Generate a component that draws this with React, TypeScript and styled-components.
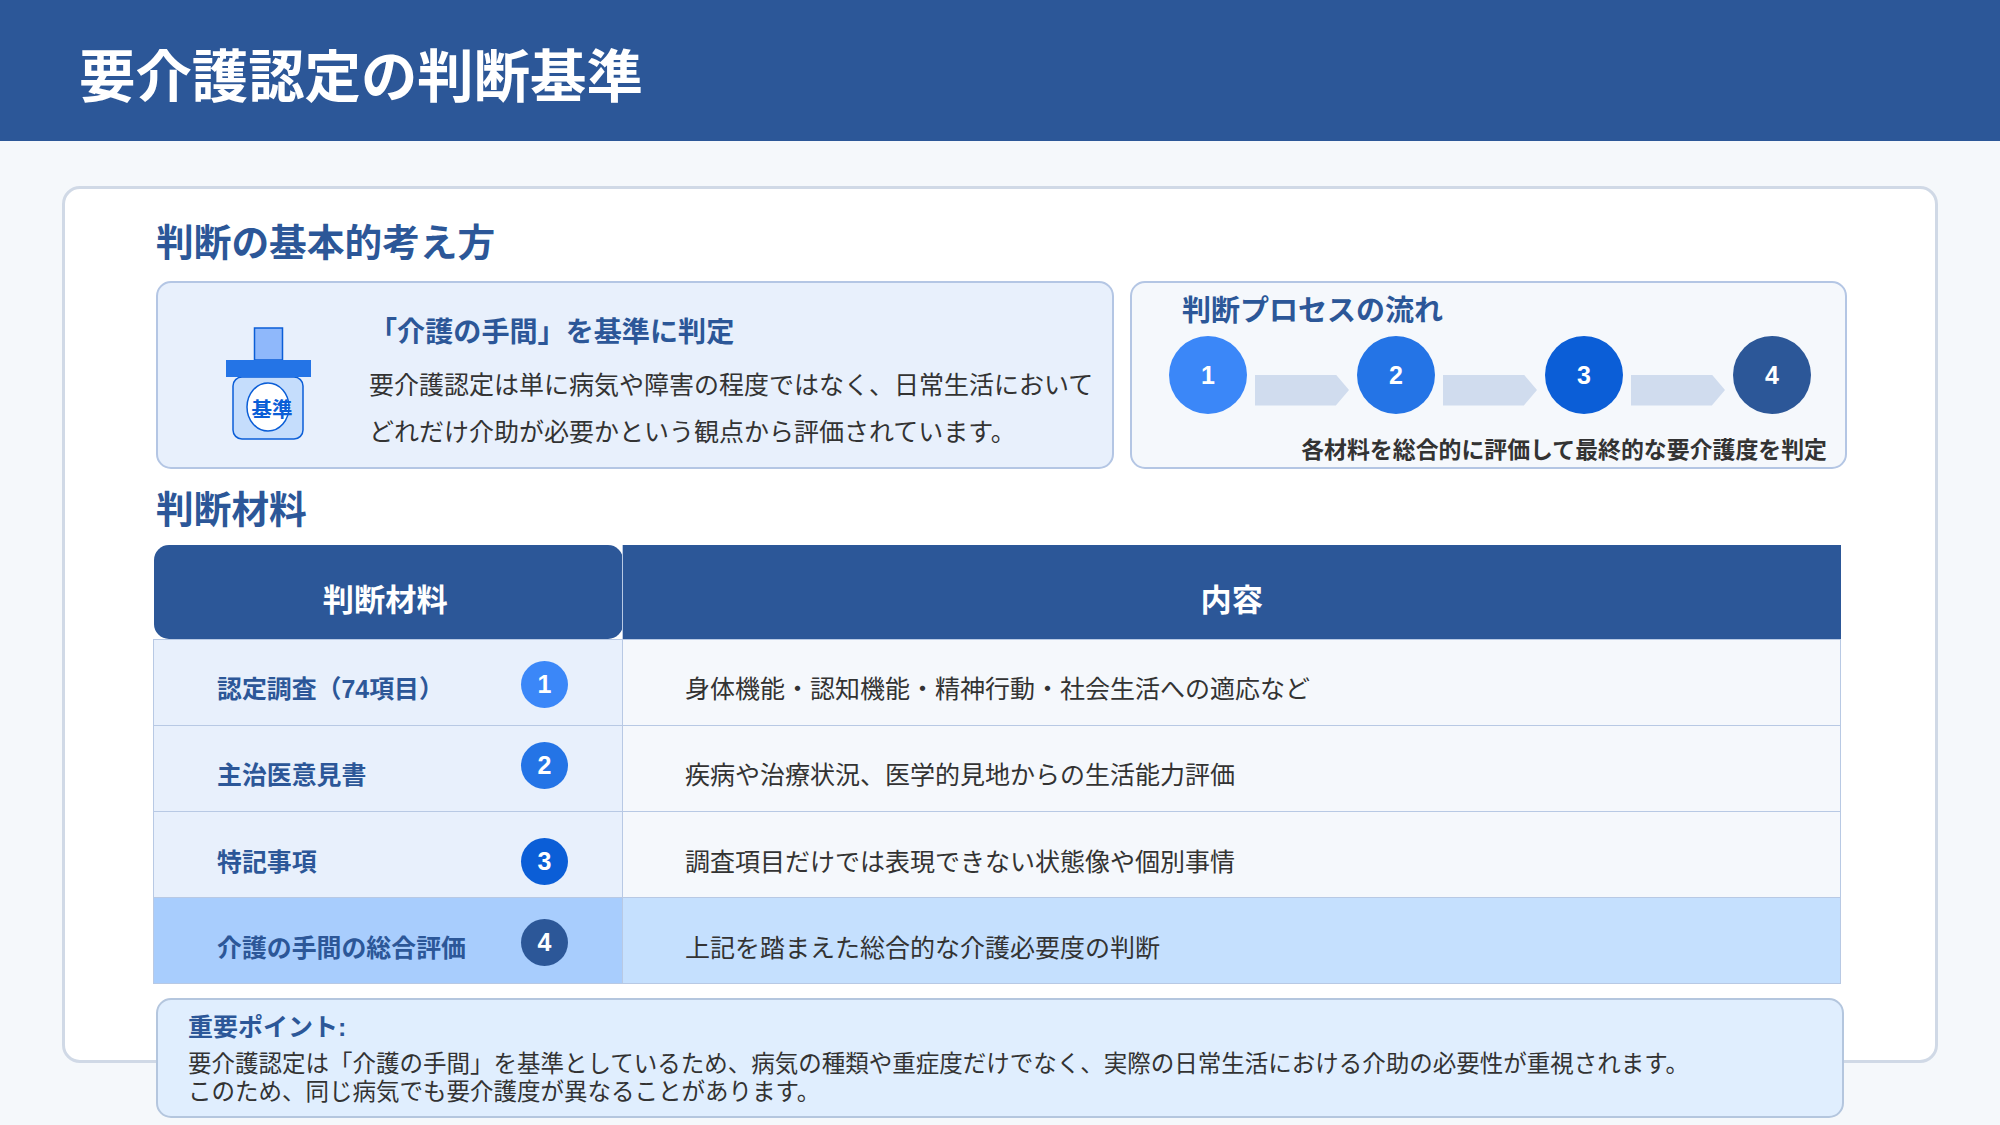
import React from "react";
import styled, { createGlobalStyle } from "styled-components";

const FONT = `"Liberation Sans", "Noto Sans CJK JP", sans-serif`;

const Global = createGlobalStyle`
  html, body { margin: 0; padding: 0; background: #f5f8fb; }
  body { font-family: ${FONT}; width: 2000px; height: 1125px; overflow: hidden; }
  * { box-sizing: border-box; }
`;

const Page = styled.div`
  width: 2000px;
  height: 1125px;
  background: #f5f8fb;
  display: flex;
  flex-direction: column;
`;

const Header = styled.header`
  height: 141px;
  background: #2c5798;
  display: flex;
  align-items: center;
  padding: 15px 0 0 79px;
`;

const Title = styled.h1`
  margin: 0;
  color: #fff;
  font-size: 56.4px;
  font-weight: 700;
  line-height: 1;
`;

const Main = styled.main`
  padding: 45px 62px 0;
`;

const Card = styled.section`
  height: 877px;
  background: #fff;
  border: 3px solid #d0d9e6;
  border-radius: 18px;
  padding: 31px 88px 0 91px;
`;

const SectionTitle = styled.h2<{ $gap?: number }>`
  margin: ${(p) => p.$gap ?? 0}px 0 0;
  color: #2c5798;
  font-size: 37.7px;
  line-height: 46px;
  font-weight: 700;
`;

const TopRow = styled.div`
  display: grid;
  grid-template-columns: 958px 717px;
  gap: 16px;
  margin-top: 15px;
  height: 188px;
`;

const Concept = styled.div`
  display: flex;
  align-items: center;
  background: #e8f0fc;
  border: 2px solid #b4c6e4;
  border-radius: 15px;
  padding-left: 50px;
  gap: 41px;
`;

const IconSvg = styled.svg`
  flex: none;
  width: 120px;
  height: 120px;
  margin-top: 23px;
  overflow: visible;
`;

const IconText = styled.text`
  font-family: ${FONT};
  font-size: 20.5px;
  font-weight: 700;
  fill: #0b5ed7;
`;

const ConceptBody = styled.div`
  display: flex;
  flex-direction: column;
  padding-top: 18px;
`;

const ConceptTitle = styled.h3`
  margin: 0 0 9px;
  color: #2c5798;
  font-size: 28.1px;
  line-height: 40px;
  font-weight: 700;
`;

const ConceptText = styled.p`
  margin: 0;
  color: #333;
  font-size: 25px;
  line-height: 47px;
`;

const Process = styled.div`
  background: #f5f8fc;
  border: 2px solid #b4c6e4;
  border-radius: 15px;
  padding: 8px 18px 0 37px;
  display: flex;
  flex-direction: column;
`;

const ProcessTitle = styled.h3`
  margin: 0 0 0 13px;
  color: #2c5798;
  font-size: 29px;
  line-height: 40px;
  font-weight: 700;
`;

const Steps = styled.div`
  display: flex;
  align-items: center;
  gap: 8px;
  margin-top: 5px;
`;

const StepCircle = styled.div<{ $color: string }>`
  flex: none;
  width: 78px;
  height: 78px;
  border-radius: 50%;
  background: ${(p) => p.$color};
  color: #fff;
  font-weight: 700;
  font-size: 25px;
  display: flex;
  align-items: center;
  justify-content: center;
`;

const Arrow = styled.div`
  flex: none;
  width: 94px;
  height: 31px;
  margin-top: 30px;
  background: #d0dcee;
  clip-path: polygon(0 0, 86% 0, 100% 50%, 86% 100%, 0 100%);
`;

const ProcessNote = styled.p`
  margin: 20px 0 0;
  text-align: right;
  color: #333;
  font-size: 22.9px;
  font-weight: 700;
  line-height: 32px;
`;

const TableWrap = styled.div`
  margin: 12px 0 0 -3px;
  width: 1688px;
`;

const Table = styled.table`
  width: 100%;
  table-layout: fixed;
  border-collapse: collapse;
`;

const Th = styled.th<{ $rounded?: boolean }>`
  height: 94px;
  padding: 12px ${(p) => (p.$rounded ? "5px" : "0")} 0 0;
  background: #2c5798;
  color: #fff;
  font-size: 31.2px;
  font-weight: 700;
  text-align: center;
  border-radius: ${(p) => (p.$rounded ? "15px" : "0")};
  border-right: ${(p) => (p.$rounded ? "1px solid #b8c9e4" : "none")};
`;

const Tr = styled.tr`
  height: 86px;
`;

const NameCell = styled.td<{ $strong?: boolean; $pad: number }>`
  position: relative;
  padding: ${(p) => p.$pad}px 0 0 63px;
  background: ${(p) => (p.$strong ? "#a8cdfd" : "#e8f0fc")};
  border: 1px solid #b8c9e4;
  color: #2c5798;
  font-size: 24.9px;
  font-weight: 700;
`;

const DescCell = styled.td<{ $strong?: boolean; $pad: number }>`
  padding: ${(p) => p.$pad}px 0 0 62px;
  background: ${(p) => (p.$strong ? "#c5e0fe" : "#f5f8fc")};
  border: 1px solid #b8c9e4;
  color: #333;
  font-size: 25px;
`;

const Badge = styled.span<{ $color: string; $top: number }>`
  position: absolute;
  left: 367px;
  top: ${(p) => p.$top}px;
  width: 47px;
  height: 47px;
  border-radius: 50%;
  background: ${(p) => p.$color};
  color: #fff;
  font-size: 25px;
  font-weight: 700;
  display: flex;
  align-items: center;
  justify-content: center;
`;

const Note = styled.aside`
  width: 1688px;
  height: 120px;
  margin-top: 14px;
  background: #e0eefe;
  border: 2px solid #b4c6de;
  border-radius: 15px;
  padding: 12px 30px 0;
`;

const NoteTitle = styled.div`
  color: #2c5798;
  font-size: 25px;
  line-height: 30px;
  font-weight: 700;
  margin-bottom: 8px;
`;

const NoteText = styled.p`
  margin: 0;
  color: #333;
  font-size: 23.5px;
  line-height: 28px;
`;

const C1 = "#3b87f8";
const C2 = "#2474e6";
const C3 = "#0b5ed7";
const C4 = "#2c5798";

const rows = [
  { name: "認定調査（74項目）", desc: "身体機能・認知機能・精神行動・社会生活への適応など", color: C1, top: 21, pad: 10 },
  { name: "主治医意見書", desc: "疾病や治療状況、医学的見地からの生活能力評価", color: C2, top: 16, pad: 10 },
  { name: "特記事項", desc: "調査項目だけでは表現できない状態像や個別事情", color: C3, top: 26, pad: 11 },
  { name: "介護の手間の総合評価", desc: "上記を踏まえた総合的な介護必要度の判断", color: C4, top: 21, pad: 11, strong: true },
];

const steps = [C1, C2, C3, C4];

export default function App() {
  return (
    <Page>
      <Global />
      <Header>
        <Title>要介護認定の判断基準</Title>
      </Header>
      <Main>
        <Card>
          <SectionTitle>判断の基本的考え方</SectionTitle>
          <TopRow>
            <Concept>
              <IconSvg viewBox="0 0 120 120">
                <rect x="46.5" y="1" width="28" height="32" fill="#8fb8fb" stroke="#0b5ed7" strokeWidth="1.5" />
                <rect x="25" y="50" width="70" height="62" rx="9" fill="#c5ddfc" stroke="#0b5ed7" strokeWidth="1.5" />
                <rect x="18" y="33" width="85" height="17" fill="#2474e6" />
                <ellipse cx="60" cy="80" rx="21" ry="24" fill="#fff" stroke="#0b5ed7" strokeWidth="1.5" />
                <IconText x="64" y="90" textAnchor="middle">基準</IconText>
              </IconSvg>
              <ConceptBody>
                <ConceptTitle>「介護の手間」を基準に判定</ConceptTitle>
                <ConceptText>
                  要介護認定は単に病気や障害の程度ではなく、日常生活において
                  <br />
                  どれだけ介助が必要かという観点から評価されています。
                </ConceptText>
              </ConceptBody>
            </Concept>
            <Process>
              <ProcessTitle>判断プロセスの流れ</ProcessTitle>
              <Steps>
                {steps.map((c, i) => (
                  <React.Fragment key={c}>
                    <StepCircle $color={c}>{i + 1}</StepCircle>
                    {i < 3 && <Arrow />}
                  </React.Fragment>
                ))}
              </Steps>
              <ProcessNote>各材料を総合的に評価して最終的な要介護度を判定</ProcessNote>
            </Process>
          </TopRow>
          <SectionTitle $gap={18}>判断材料</SectionTitle>
          <TableWrap>
            <Table>
              <colgroup>
                <col style={{ width: "469px" }} />
                <col />
              </colgroup>
              <thead>
                <tr>
                  <Th $rounded>判断材料</Th>
                  <Th>内容</Th>
                </tr>
              </thead>
              <tbody>
                {rows.map((r, i) => (
                  <Tr key={r.name}>
                    <NameCell $strong={r.strong} $pad={r.pad}>
                      {r.name}
                      <Badge $color={r.color} $top={r.top}>{i + 1}</Badge>
                    </NameCell>
                    <DescCell $strong={r.strong} $pad={r.pad}>{r.desc}</DescCell>
                  </Tr>
                ))}
              </tbody>
            </Table>
          </TableWrap>
          <Note>
            <NoteTitle>重要ポイント:</NoteTitle>
            <NoteText>
              要介護認定は「介護の手間」を基準としているため、病気の種類や重症度だけでなく、実際の日常生活における介助の必要性が重視されます。
              <br />
              このため、同じ病気でも要介護度が異なることがあります。
            </NoteText>
          </Note>
        </Card>
      </Main>
    </Page>
  );
}
